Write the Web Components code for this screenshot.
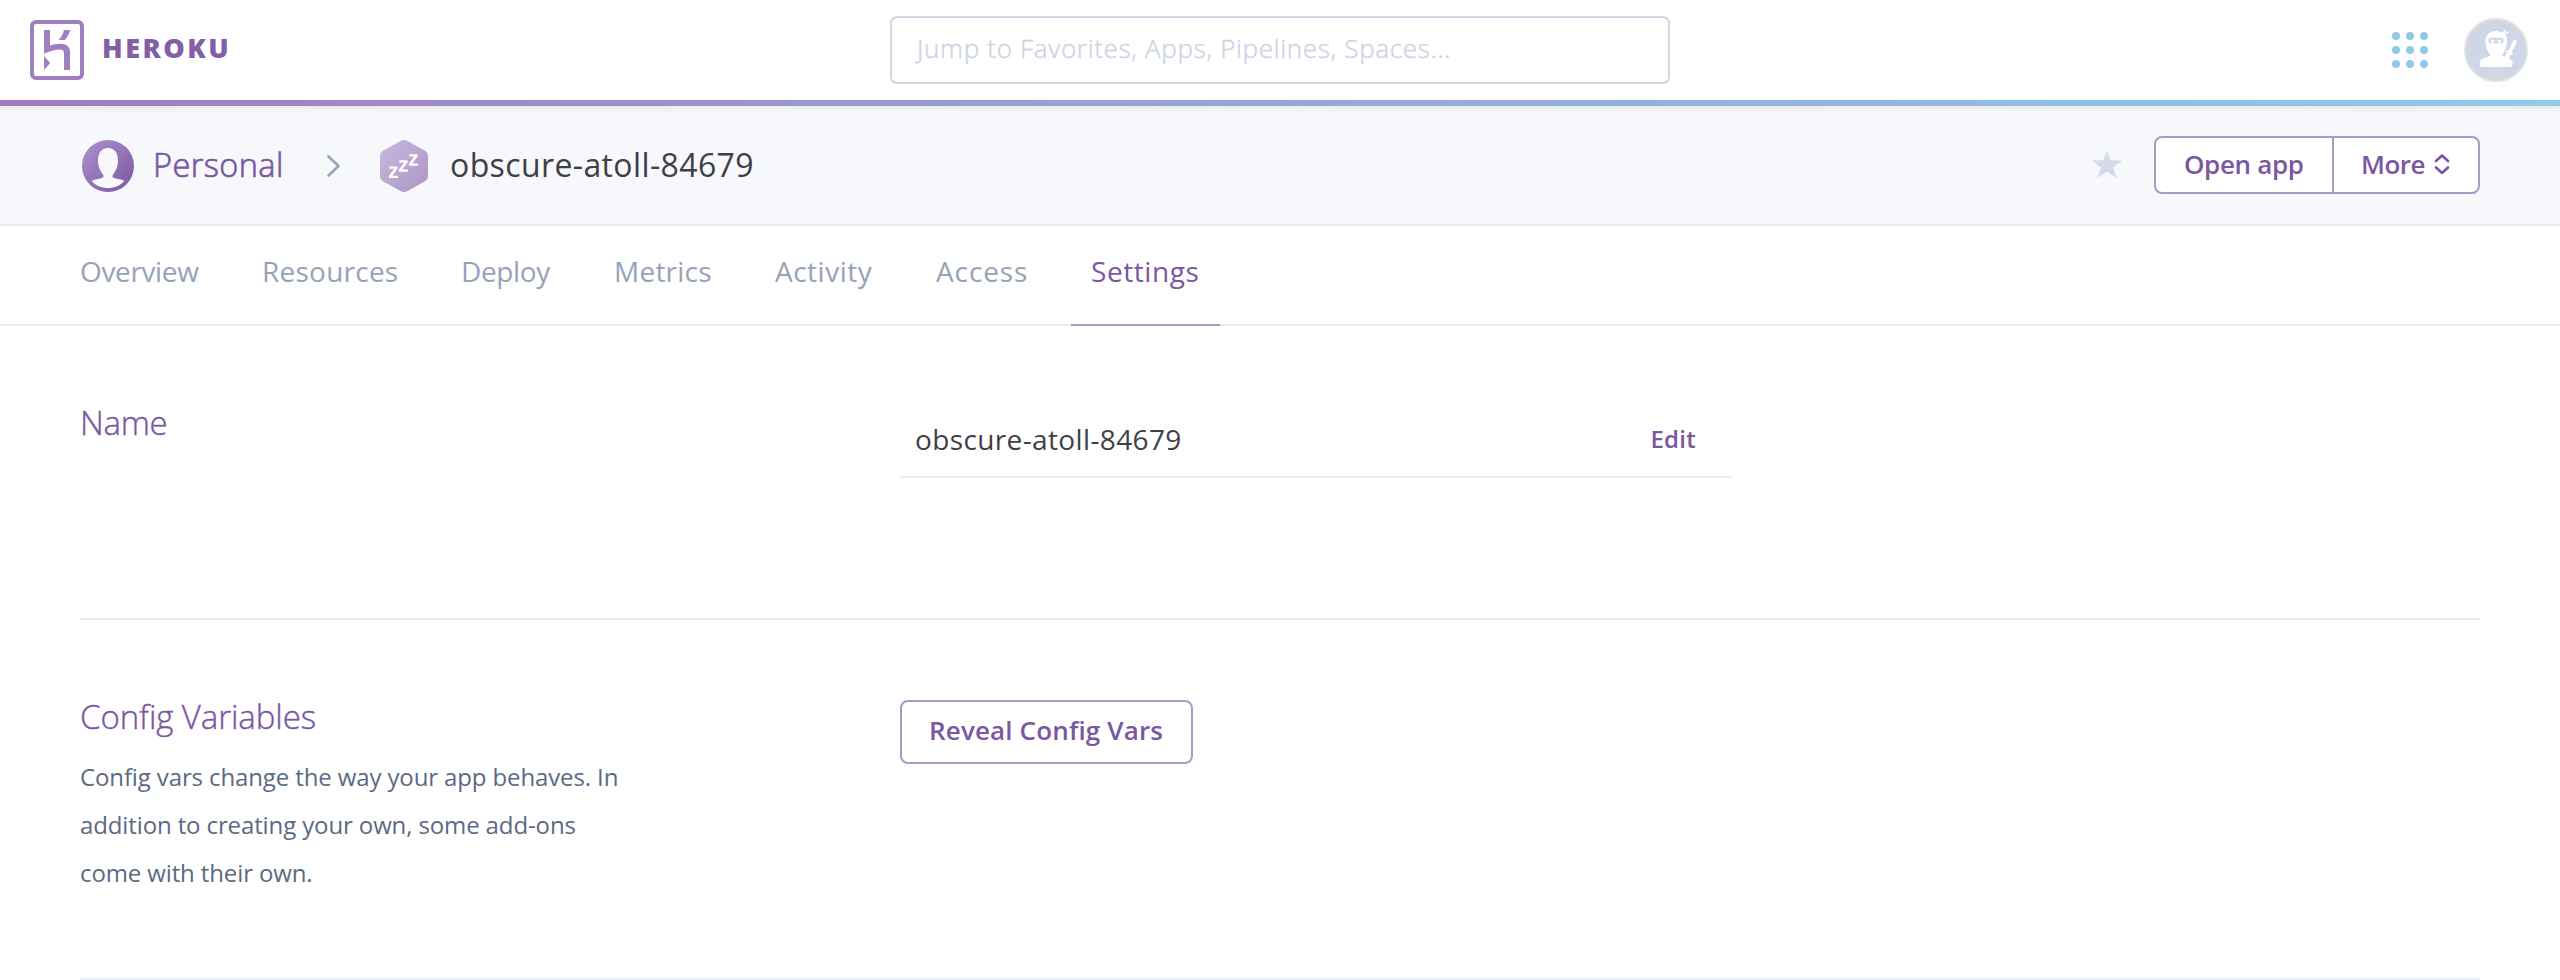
<!DOCTYPE html>
<html lang="en">
<head>
<meta charset="utf-8">
<title>obscure-atoll-84679 · Settings | Heroku</title>
<style>
  html, body { margin: 0; background: #fff; }
  body { font-family: "Open Sans", "Noto Sans", sans-serif; color: #3f3f44; height: 980px; overflow: hidden; }
</style>
</head>
<body>
<app-shell>
  <global-header></global-header>
  <app-bar name="obscure-atoll-84679"></app-bar>
  <tab-bar>
    <tab-item style="--w:160px;--ls:-.36px">Overview</tab-item>
    <tab-item style="--w:177px;--ls:.24px">Resources</tab-item>
    <tab-item style="--w:131px;--ls:-.38px">Deploy</tab-item>
    <tab-item style="--w:139px;--ls:.24px">Metrics</tab-item>
    <tab-item style="--w:139px;--ls:.5px">Activity</tab-item>
    <tab-item style="--w:133px;--ls:.9px">Access</tab-item>
    <tab-item style="--w:149px;--ls:.56px" active>Settings</tab-item>
  </tab-bar>
  <settings-section style="--h:292px;--tls:-.3px">
    <span slot="title">Name</span>
    <name-row>obscure-atoll-84679</name-row>
  </settings-section>
  <settings-section style="--h:358px;--tls:-.08px">
    <span slot="title">Config Variables</span>
    <span slot="text">Config vars change the way your app behaves. In<br>addition to creating your own, some add-ons<br>come with their own.</span>
    <outline-button>Reveal Config Vars</outline-button>
  </settings-section>
</app-shell>

<script>
const define = (tag, html) => {
  const tpl = document.createElement('template');
  tpl.innerHTML = html;
  customElements.define(tag, class extends HTMLElement {
    constructor() {
      super();
      this.attachShadow({ mode: 'open' }).append(tpl.content.cloneNode(true));
    }
    connectedCallback() {
      const n = this.shadowRoot.querySelector('[data-name]');
      if (n) n.textContent = this.getAttribute('name');
    }
  });
};

define('app-shell', `<style>:host{display:flex;flex-direction:column;width:100%}</style><slot></slot>`);

define('heroku-logo', `
<style>
  :host{display:flex;align-items:center;gap:18px}
  svg{display:block}
  span{font-weight:800;font-size:27px;line-height:40px;letter-spacing:2.5px;color:#845fa6;margin-bottom:4px}
</style>
<svg width="54" height="60" viewBox="0 0 54 60" fill="#9e7fc0">
  <rect x="2" y="2" width="50" height="56" rx="4" fill="none" stroke="#9e7fc0" stroke-width="4"/>
  <path d="M14 10h6v15.500C23.500 24.400 27 23.700 30.500 23.700c6 0 9.500 3 9.500 8.300v18h-6V33c0-2.500-1.300-3.600-4-3.600-5 0-10.500 1.800-16 4.300z"/>
  <path d="M34 10h6.200C39.500 13.500 37.500 17 34.800 20h-6.300C31.500 17 33.300 13.500 34 10z"/>
  <path d="M14 36l6.200 7L14 50z"/>
</svg>
<span>HEROKU</span>`);

define('search-box', `
<style>
  :host{display:block;width:780px;height:68px;box-sizing:border-box;border:2px solid #cfd7e6;border-radius:7px;background:#fff;padding:0 25px}
  span{display:block;font-weight:300;font-size:26px;line-height:60px;letter-spacing:.68px;color:#cbd3e4;white-space:pre;-webkit-text-stroke:.4px #cbd3e4}
</style><span>Jump to Favorites, Apps, Pipelines, Spaces...</span>`);

define('dot-grid', `
<style>
  :host{display:grid;grid-template-columns:repeat(3,8px);gap:6px}
  i{width:8px;height:8px;border-radius:50%;background:#90cae8}
</style><i></i><i></i><i></i><i></i><i></i><i></i><i></i><i></i><i></i>`);

define('ninja-avatar', `
<style>:host{display:block}svg{display:block}</style>
<svg width="64" height="64" viewBox="0 0 64 64">
  <circle cx="32" cy="32" r="31" fill="#cfd7e6" stroke="#e1e1e1" stroke-width="2"/>
  <g fill="#fff">
    <path d="M21.500 22c.5-5.500 4.800-9 10.500-9 2.500 0 4.500.7 6.200 1.800l2.500-3 1.200 1-1.700 2.500 4-2.100.6 1.200-3.400 2c1.200 1.700 1.700 3.600 1.600 5.600-.2 6.500-2 11-4.600 14.600v1.200c3.500 1.700 8.500 2.300 9.800 5.200.6 1.600.3 4 0 4.800-.3.700-1 1.200-2 1.200H18c-1 0-1.800-.5-2-1.400-.3-1.500-.3-3.600.4-4.900 1.500-2.600 6.500-3.200 9.600-4.900v-1c-2.800-4.200-4.700-8.500-4.500-14.800z"/>
    <path d="M50 21.300l3.200 1.600-5.500 11.600 1.300.8-.9 1.800-1.600-.6-2.200 4.500-3.800-2 2.800-4.300-1.500-1 .9-1.600 1.800.6z"/>
  </g>
  <rect x="24.500" y="19.800" width="15" height="5.400" rx="2" fill="#cfd7e6"/>
  <path d="M27 21.700h3.300v1.400a1.600 1.600 0 0 1-3.300 0zM33.800 21.700h3.300v1.400a1.600 1.600 0 0 1-3.300 0z" fill="#fff"/>
</svg>`);

define('global-header', `
<style>
  :host{display:block;position:relative;z-index:1;box-shadow:0 2px 6px rgba(60,50,60,.1)}
  .row{display:grid;grid-template-columns:1fr auto 1fr;align-items:center;height:100px;padding:0 32px 0 30px;background:#fff;column-gap:0}
  search-box{margin-left:2px}
  .right{display:flex;align-items:center;justify-content:flex-end;gap:36px}
  .line{height:6px;background:linear-gradient(90deg,#a07cbf,#9a9bd0 35%,#93b3dd 67%,#90cbe8)}
</style>
<div class="row">
  <heroku-logo></heroku-logo><search-box></search-box>
  <div class="right"><dot-grid></dot-grid><ninja-avatar></ninja-avatar></div>
</div>
<div class="line"></div>`);

define('button-group', `
<style>
  :host{display:flex;width:326px;height:58px;box-sizing:border-box;border:2px solid #ab98c5;border-radius:8px;background:#fff;color:#79589f;font-weight:600;font-size:26px;line-height:52px}
  div{box-sizing:border-box;white-space:nowrap}
  .open{width:176px;padding-left:28px;letter-spacing:-.35px}
  .more{width:146px;border-left:2px solid #ab98c5;padding-left:27px;display:flex;letter-spacing:-.48px}
  svg{margin:15px 0 0 9px}
</style>
<div class="open">Open app</div>
<div class="more">More<svg width="16" height="22" viewBox="0 0 16 22" fill="none" stroke="#79589f" stroke-width="2.600" stroke-linecap="round" stroke-linejoin="round"><path d="M2 8L8 2.500l6 5.500M2 14.500l6 5.500 6-5.500"/></svg></div>`);

define('app-bar', `
<style>
  :host{display:flex;align-items:center;height:118px;padding:0 80px;background:#f7f8fc;border-bottom:2px solid #e6ebf3}
  svg{display:block;flex:none}
  .person{margin:2px 0 0 2px}
  .owner{margin:0 0 1px 19px;font-weight:300;font-size:32.500px;line-height:44px;letter-spacing:.4px;color:#79589f;width:131px;-webkit-text-stroke:.7px #79589f}
  .chev{margin:2px 0 0 42px}
  .hex{margin:2px 0 0 38px}
  .app{margin:0 auto 1px 22px;font-size:32px;line-height:44px;letter-spacing:.38px;color:#3f3f44}
  .star{margin:0 32px 2px 0}
</style>
<svg class="person" width="52" height="52" viewBox="0 0 52 52">
  <defs><linearGradient id="p" x1="0" y1="0" x2="1" y2="1"><stop offset="0" stop-color="#ae91cf"/><stop offset="1" stop-color="#79589f"/></linearGradient></defs>
  <circle cx="26" cy="26" r="26" fill="url(#p)"/>
  <path d="M26 8c6.500 0 10 5 10 12.500 0 6.500-2.500 10.500-5.300 14.500-.9 1.800.2 2.800 2.800 3.400 3.500.6 6.500 1 8.800 2.300C38.500 45.500 32.500 48 26 48s-12.500-2.500-16.300-7.300c2.300-1.300 5.300-1.700 8.800-2.300 2.600-.6 3.700-1.600 2.800-3.400C18.500 31 16 27 16 20.500 16 13 19.500 8 26 8z" fill="#f9f9fd"/>
</svg>
<span class="owner">Personal</span>
<svg class="chev" width="16" height="24" viewBox="0 0 16 24" fill="none" stroke="#96a5b8" stroke-width="2.600" stroke-linecap="round" stroke-linejoin="round"><path d="M2.500 2.500L12.500 12 2.500 21.500"/></svg>
<svg class="hex" width="48" height="52" viewBox="0 0 48 52">
  <defs><linearGradient id="h" x1="0" y1="0" x2="1" y2="1"><stop offset="0" stop-color="#c9b9de"/><stop offset="1" stop-color="#ab96c3"/></linearGradient></defs>
  <path d="M20.500 1q3.500-2 7 0L44.500 10.500q3.500 2 3.500 5.500v20q0 3.500-3.500 5.500L27.500 51q-3.500 2-7 0L3.500 41.500Q0 39.500 0 36V16q0-3.500 3.500-5.500z" fill="url(#h)"/>
  <g fill="#fff">
    <path id="z" d="M9.300 26.500h8.300v2L12.300 35.700h5.600V38H8.900v-2L14.200 28.800H9.300z"/>
    <use href="#z" x="10" y="-6.200"/><use href="#z" x="20" y="-12.300"/>
  </g>
</svg>
<span class="app" data-name></span>
<svg class="star" width="30" height="28" viewBox="0 0 30 28"><defs><linearGradient id="s" x1="0" y1="0" x2="1" y2="1"><stop offset="0" stop-color="#dbe1ed"/><stop offset="1" stop-color="#cdd5e6"/></linearGradient></defs><path d="M15 0l3.700 10.200L30 10.600l-9 6.800L24.800 28 15 21.600 5.200 28 9 17.400 0 10.600l11.300-.4z" fill="url(#s)"/></svg>
<button-group></button-group>`);

define('tab-bar', `<style>:host{display:flex;gap:22px;height:100px;box-sizing:border-box;padding:0 60px;box-shadow:inset 0 -2px #e6ebf5}</style><slot></slot>`);

define('tab-item', `
<style>
  :host{display:block;width:var(--w);height:100px;box-sizing:border-box;padding:25px 0 0 20px;font-size:28px;line-height:40px;letter-spacing:var(--ls);color:#96a3b6;white-space:nowrap}
  :host([active]){color:#79589f;border-bottom:2px solid #ab98c5}
</style><slot></slot>`);

define('settings-section', `
<style>
  :host{display:grid;grid-template-columns:820px 832px;height:var(--h);margin:0 80px;border-bottom:2px solid #e6ebf3;align-items:start}
  .side{padding-top:77px}
  .t{font-weight:300;font-size:33px;line-height:40px;letter-spacing:var(--tls);color:#79589f;-webkit-text-stroke:.4px #79589f}
  .p{margin-top:16px;font-size:24px;line-height:48px;letter-spacing:-.12px;color:#5a6a84;white-space:nowrap}
</style>
<div class="side"><div class="t"><slot name="title"></slot></div><div class="p"><slot name="text"></slot></div></div>
<slot></slot>`);

define('name-row', `
<style>
  :host{display:flex;justify-content:space-between;margin-top:76px;height:74px;border-bottom:2px solid #ebf0f7;padding:0 36px 0 15px;line-height:74px;font-size:28px;letter-spacing:.37px}
  b{font-weight:600;font-size:24px;line-height:73px;letter-spacing:.26px;color:#79589f}
</style><span><slot></slot></span><b>Edit</b>`);

define('outline-button', `
<style>
  :host{display:block;width:293px;height:64px;box-sizing:border-box;margin-top:80px;border:2px solid #ab98c5;border-radius:8px;padding-left:27px;font-weight:600;font-size:26px;line-height:56px;letter-spacing:.15px;color:#79589f;white-space:nowrap}
</style><slot></slot>`);
</script>
</body>
</html>
